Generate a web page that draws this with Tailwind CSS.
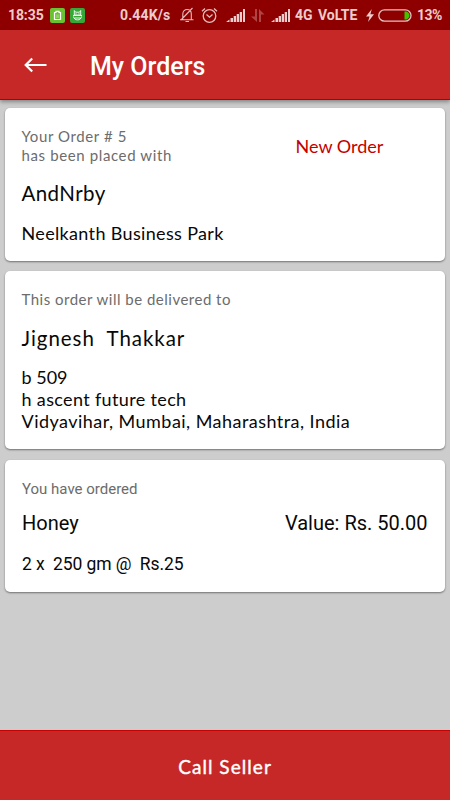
<!DOCTYPE html>
<html lang="en"><head><meta charset="utf-8"><title>My Orders</title>
<script src="https://cdn.jsdelivr.net/npm/@tailwindcss/browser@4"></script></head>
<body class="w-[450px] h-[800px] overflow-hidden bg-[#cdcdcd] font-['Lato',sans-serif] text-[#080808] flex flex-col">
<div class="h-[30px] bg-[#8e0000] flex items-center shrink-0 font-['Roboto',sans-serif] font-bold text-[14px] leading-[30px] text-[#eccccc] whitespace-nowrap">
<span class="ml-2 w-[42px] tracking-[-0.1px]">18:35</span>
<svg class="w-[15px] h-[15px]" viewBox="0 0 15 15"><rect width="15" height="15" rx="2" fill="#6ac233"/><path d="M4.500 4.500h1.500V3.300h3v1.200h1.500v7h-6z" fill="none" stroke="#fff" stroke-width="1.200"/><path d="M6 6.500h3v3.500H6z" fill="#8fd165"/></svg>
<svg class="ml-[5px] w-[15px] h-[15px]" viewBox="0 0 15 15"><rect width="15" height="15" rx="2" fill="#35a836"/><path d="M4.300 2.500l1.200 1.700h4l1.200-1.700v4.500h-6.400zM3 7.500h9M3.500 8.500c.5 4.500 7.500 4.500 8 0M4.500 10h6" fill="none" stroke="#fff" stroke-width=".9"/><path d="M5.500 5.800h1M8.500 5.800h1" stroke="#fff"/></svg>
<span class="ml-[35px] w-[60px] tracking-[0.13px]">0.44K/s</span>
<svg class="w-[14px] h-[16px]" viewBox="0 0 14 16" fill="none" stroke="#e4bcbc" stroke-width="1.100"><path d="M0 12.700h13.500M2.800 12.500V7c0-6 8.500-6 8.500 0v5.500M5.500 14.500h3.500M12.500 1L1 13"/></svg>
<svg class="ml-[7px] w-[17px] h-[17px]" viewBox="0 0 17 17" fill="none" stroke="#e4bcbc" stroke-width="1.300"><circle cx="8.500" cy="9" r="6.300"/><path d="M5.500 7.500l3 2.700 3-2.700M1 4.300l3-2.800M16 4.300l-3-2.800"/></svg>
<svg class="ml-2 mt-px w-[19px] h-[13px]" viewBox="0 0 19 13" fill="#eccccc"><path d="M0 13l3.500-2.500V13zM4.500 9H7v4H4.500zM7.700 7H10v6H7.700zM10.700 5H13v8h-2.300zM13.700 3H16v10h-2.300zM17 0h2v13h-2z"/></svg>
<svg class="ml-[6px] w-[14px] h-[13px]" viewBox="0 0 14 13" fill="#ad4545"><path d="M4 0h2v13L0 7.500h4zM8 13V0l5.500 5.500H10V13z"/></svg>
<svg class="ml-[6px] mt-px w-[19px] h-[13px]" viewBox="0 0 19 13" fill="#eccccc"><path d="M0 13l3.500-2.500V13zM4.500 9H7v4H4.500zM7.700 7H10v6H7.700zM10.700 5H13v8h-2.300zM13.700 3H16v10h-2.300zM17 0h2v13h-2z"/></svg>
<span class="ml-[5px] w-[23px]">4G</span>
<span class="w-[48px]">VoLTE</span>
<svg class="w-[8px] h-[13px]" viewBox="0 0 8 13" fill="#eccccc"><path d="M5.800 0L0 7.500h3.500L2 13l6-7.800H4.400z"/></svg>
<svg class="ml-1 w-[34px] h-[13px]" viewBox="0 0 34 13"><rect x=".8" y=".8" width="32.200" height="11.400" rx="5.700" fill="none" stroke="#e4c0c0" stroke-width="1.300"/><path d="M26.500 2.500h2c4 1.500 4 6.500 0 8h-2z" fill="#41c300"/></svg>
<span class="ml-[5px] tracking-[-0.5px]">13%</span>
</div>
<header class="h-[70px] bg-[#c62828] border-b border-[#b00000] flex items-center shrink-0 shadow-[0_2px_4px_rgba(0,0,0,0.35)]">
<svg class="ml-[24px] w-[23px] h-[16px]" viewBox="0 0 23 16" fill="none" stroke="#fff" stroke-width="2.200"><path d="M22.500 8H2M8.200 1.500L1.700 8l6.500 6.500"/></svg>
<h1 class="ml-[43px] mt-[4px] font-['Roboto',sans-serif] font-medium text-[25px] text-white">My Orders</h1></header>
<main class="flex-1 px-[5px] pt-2 flex flex-col">
<section class="h-[153px] shrink-0 bg-white rounded-[5px] shadow-[0_1px_2px_rgba(0,0,0,0.45)] pl-[16.500px] pt-[19px] flex">
<div class="w-[274px]">
<p class="text-[15px] leading-[19px] text-[#6c6c6c]"><span class="tracking-[0.6px]">Your Order # 5</span><br><span class="tracking-[0.62px]">has been placed with</span></p>
<h2 class="mt-4 text-[20.500px] leading-[24px] tracking-[0.4px]">AndNrby</h2>
<p class="mt-[17px] text-[18px] leading-[22px] tracking-[0.34px]">Neelkanth Business Park</p>
</div>
<p class="mt-[8px] text-[18px] leading-[22px] text-[#c40000]">New Order</p>
</section>
<section class="mt-[10px] h-[178px] shrink-0 bg-white rounded-[5px] shadow-[0_1px_2px_rgba(0,0,0,0.45)] pl-[16.500px] pt-[19px]">
<p class="text-[15px] leading-[19px] tracking-[0.49px] text-[#6c6c6c]">This order will be delivered to</p>
<h2 class="mt-[17px] text-[20.500px] leading-[24px] tracking-[0.95px] whitespace-pre">Jignesh  Thakkar</h2>
<p class="mt-4 text-[18px] leading-[22px]">b 509<br><span class="tracking-[0.35px]">h ascent future tech</span><br><span class="tracking-[0.46px]">Vidyavihar, Mumbai, Maharashtra, India</span></p>
</section>
<section class="mt-[11px] h-[132px] shrink-0 bg-white rounded-[5px] shadow-[0_1px_2px_rgba(0,0,0,0.45)] pl-[17px] pr-[17.500px] pt-[20px] font-['Roboto',sans-serif]">
<p class="text-[15px] leading-[19px] text-[#6c6c6c]">You have ordered</p>
<div class="mt-3 text-[20px] leading-[24px] flex justify-between"><span>Honey</span><span>Value: Rs. 50.00</span></div>
<p class="mt-[18px] text-[17.500px] leading-[22px] tracking-[-0.1px] whitespace-pre">2 x  250 gm @  Rs.25</p>
</section>
</main>
<footer class="h-[70px] shrink-0 bg-[#c62828] border-t border-[#c80000] pt-[4px] flex items-center justify-center text-white text-[19px] tracking-[1.050px] [-webkit-text-stroke:0.4px_white]">Call Seller</footer>
</body></html>
